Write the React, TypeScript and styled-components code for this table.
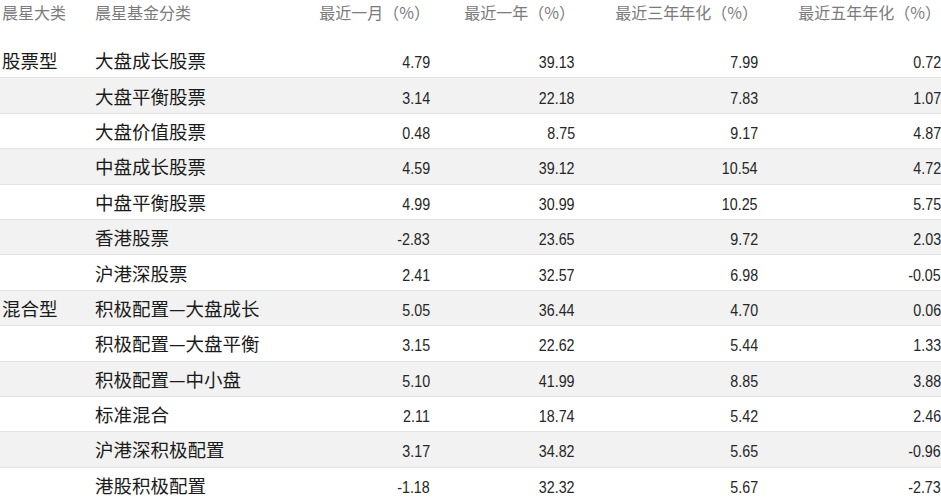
import styled, { createGlobalStyle } from "styled-components"

interface FundRow {
  group?: string
  name: string
  m1: string
  y1: string
  y3: string
  y5: string
}

const rows: FundRow[] = [
  { group: "股票型", name: "大盘成长股票", m1: "4.79", y1: "39.13", y3: "7.99", y5: "0.72" },
  { name: "大盘平衡股票", m1: "3.14", y1: "22.18", y3: "7.83", y5: "1.07" },
  { name: "大盘价值股票", m1: "0.48", y1: "8.75", y3: "9.17", y5: "4.87" },
  { name: "中盘成长股票", m1: "4.59", y1: "39.12", y3: "10.54", y5: "4.72" },
  { name: "中盘平衡股票", m1: "4.99", y1: "30.99", y3: "10.25", y5: "5.75" },
  { name: "香港股票", m1: "-2.83", y1: "23.65", y3: "9.72", y5: "2.03" },
  { name: "沪港深股票", m1: "2.41", y1: "32.57", y3: "6.98", y5: "-0.05" },
  { group: "混合型", name: "积极配置—大盘成长", m1: "5.05", y1: "36.44", y3: "4.70", y5: "0.06" },
  { name: "积极配置—大盘平衡", m1: "3.15", y1: "22.62", y3: "5.44", y5: "1.33" },
  { name: "积极配置—中小盘", m1: "5.10", y1: "41.99", y3: "8.85", y5: "3.88" },
  { name: "标准混合", m1: "2.11", y1: "18.74", y3: "5.42", y5: "2.46" },
  { name: "沪港深积极配置", m1: "3.17", y1: "34.82", y3: "5.65", y5: "-0.96" },
  { name: "港股积极配置", m1: "-1.18", y1: "32.32", y3: "5.67", y5: "-2.73" },
]

const GlobalStyle = createGlobalStyle`
  body {
    margin: 0;
    background: #fff;
    font-family: "Noto Sans CJK SC", "Noto Sans", sans-serif;
    overflow: hidden;
  }
`

const Table = styled.div`
  width: 941px;
`

const Grid = styled.div`
  display: grid;
  grid-template-columns: 93px 220px 115px 145px 183px 183px;
  padding-left: 2px;
  align-items: center;
`

const HeaderRow = styled(Grid)`
  height: 42px;
  align-items: start;
  color: #7b7b7b;
  font-size: 16px;
  line-height: 24px;
`

const BodyRow = styled(Grid)<{ $shaded: boolean; $first: boolean }>`
  height: 35.4px;
  box-sizing: border-box;
  background: ${(p) => (p.$shaded ? "#f2f2f2" : "#fff")};
  border-top: 1px solid ${(p) => (p.$first ? "transparent" : "#e2e2e2")};
  color: #1a1a1a;
  font-size: 18.5px;
`

const HeadCell = styled.div<{ $num?: boolean }>`
  white-space: nowrap;
  text-align: ${(p) => (p.$num ? "right" : "left")};
`

const TextCell = styled.div`
  white-space: nowrap;
`

const NumCell = styled.div`
  text-align: right;
  white-space: nowrap;
`

const Num = styled.span`
  display: inline-block;
  font-family: "Liberation Sans", Arial, sans-serif;
  font-size: 17px;
  color: #262626;
  transform: scaleX(0.84);
  transform-origin: right center;
`

export default function App() {
  return (
    <>
      <GlobalStyle />
      <Table>
        <HeaderRow>
          <HeadCell>晨星大类</HeadCell>
          <HeadCell>晨星基金分类</HeadCell>
          <HeadCell $num>最近一月（%）</HeadCell>
          <HeadCell $num>最近一年（%）</HeadCell>
          <HeadCell $num>最近三年年化（%）</HeadCell>
          <HeadCell $num>最近五年年化（%）</HeadCell>
        </HeaderRow>
        {rows.map((r, i) => (
          <BodyRow key={r.name} $shaded={i % 2 === 1} $first={i === 0}>
            <TextCell>{r.group ?? ""}</TextCell>
            <TextCell>{r.name}</TextCell>
            <NumCell><Num>{r.m1}</Num></NumCell>
            <NumCell><Num>{r.y1}</Num></NumCell>
            <NumCell><Num>{r.y3}</Num></NumCell>
            <NumCell><Num>{r.y5}</Num></NumCell>
          </BodyRow>
        ))}
      </Table>
    </>
  )
}
